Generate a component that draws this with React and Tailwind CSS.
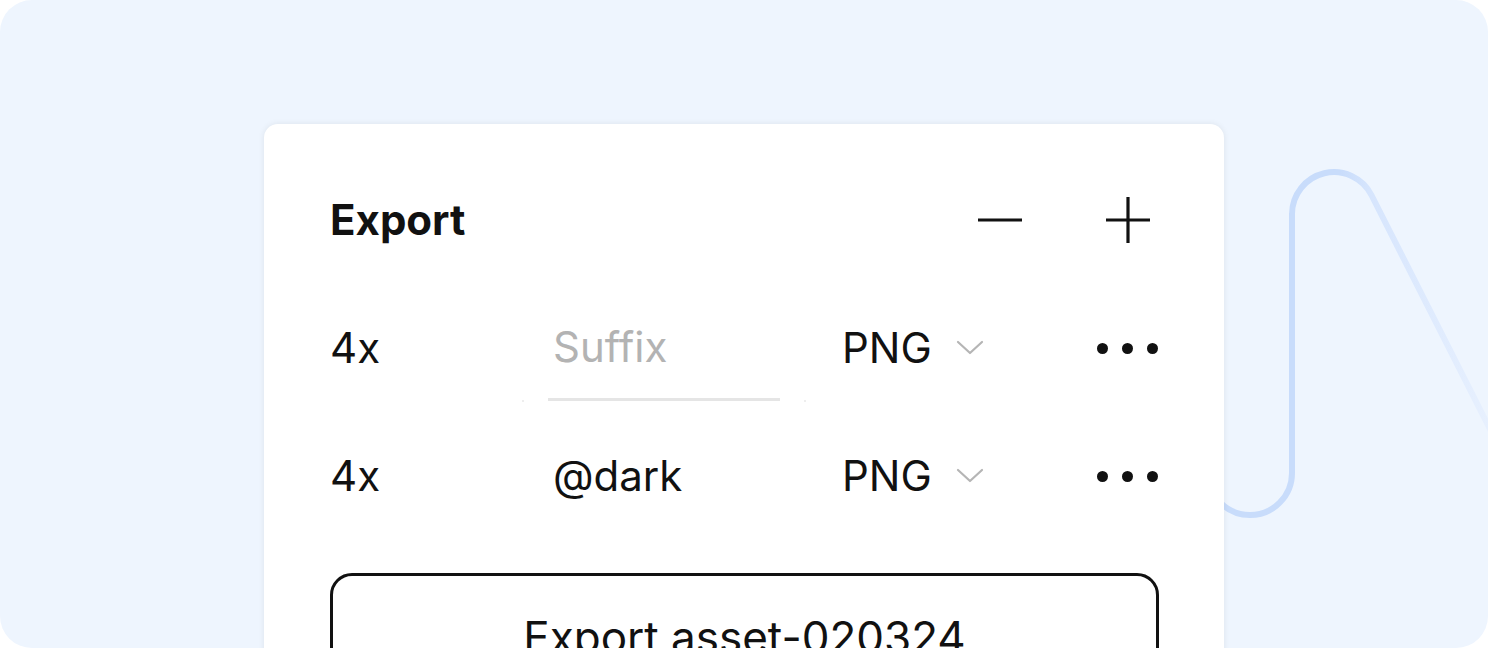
import React from "react";

function Chevron() {
  return (
    <svg width="28" height="16" viewBox="0 0 28 16" fill="none">
      <path d="M2 2 L14 13 L26 2" stroke="#b5b5b5" strokeWidth="2.2" strokeLinecap="round" strokeLinejoin="round" />
    </svg>
  );
}

function Dots() {
  return (
    <div className="flex items-center gap-[14px]">
      <span className="block w-[11px] h-[11px] rounded-full bg-[#111]" />
      <span className="block w-[11px] h-[11px] rounded-full bg-[#111]" />
      <span className="block w-[11px] h-[11px] rounded-full bg-[#111]" />
    </div>
  );
}

function Row({ children }) {
  return (
    <div className="flex items-center h-[128px] text-[42px] text-[#111] leading-none">
      {children}
    </div>
  );
}

export default function App() {
  return (
    <div className="w-full h-[648px] bg-white" style={{ fontFamily: "Inter, 'Noto Sans', sans-serif" }}>
      <div className="relative w-full h-full rounded-[32px] bg-[#eef5fe] overflow-hidden">
        <svg className="absolute inset-0" width="1488" height="648" viewBox="0 0 1488 648" fill="none">
          <defs>
            <linearGradient id="g" gradientUnits="userSpaceOnUse" x1="1340" y1="0" x2="1488" y2="0">
              <stop offset="0" stopColor="#c8dcfb" />
              <stop offset="0.2" stopColor="#d6e5fd" />
              <stop offset="1" stopColor="#e7f0fe" />
            </linearGradient>
          </defs>
          <path
            d="M1208 473 A42 42 0 0 0 1292 473 L1292 214 A42 42 0 0 1 1371.4 195 L1601 648"
            stroke="url(#g)"
            strokeWidth="6"
            strokeLinecap="round"
          />
        </svg>
        <div className="relative z-10 pt-[124px] pl-[264px]">
          <div className="w-[960px] h-[600px] bg-white rounded-[14px] shadow-[0_0_6px_rgba(0,0,0,0.08)] pt-[32px] px-[66px]">
            <div className="flex items-center h-[128px]">
              <div className="text-[42px] font-bold text-[#111] leading-none">Export</div>
              <div className="flex-1" />
              <svg width="44" height="44" viewBox="0 0 44 44" className="mr-[84px]">
                <path d="M0 22 H44" stroke="#111" strokeWidth="3.2" />
              </svg>
              <svg width="44" height="46" viewBox="0 0 44 46" className="mr-[8px]">
                <path d="M0 23 H44 M22 0 V46" stroke="#111" strokeWidth="3.2" />
              </svg>
            </div>
            <Row>
              <div className="w-[192px]">4x</div>
              <div className="w-[284px] self-stretch flex items-center">
                <div className="w-[2px] h-[2px] rounded-full bg-[#e8e8e8] self-end mb-[10px]" />
                <div className="ml-[24px] w-[232px] h-[106px] border-b-[3px] border-[#e5e5e5] flex items-center pl-[5px] text-[#b3b3b3]">
                  Suffix
                </div>
                <div className="ml-[24px] w-[2px] h-[2px] rounded-full bg-[#e8e8e8] self-end mb-[10px]" />
              </div>
              <div className="ml-[36px] flex items-center gap-[24px]">
                <span>PNG</span>
                <Chevron />
              </div>
              <div className="flex-1" />
              <Dots />
            </Row>
            <Row>
              <div className="w-[218px]">4x</div>
              <div className="w-[232px] pl-[5px]">@dark</div>
              <div className="ml-[62px] flex items-center gap-[24px]">
                <span>PNG</span>
                <Chevron />
              </div>
              <div className="flex-1" />
              <Dots />
            </Row>
            <div className="mt-[33px] mr-[-1px] h-[120px] border-[3px] border-[#111] rounded-[22px] flex items-center justify-center text-[44px] text-[#111] leading-none pt-[8px]">
              Export asset-020324
            </div>
          </div>
        </div>
      </div>
    </div>
  );
}
